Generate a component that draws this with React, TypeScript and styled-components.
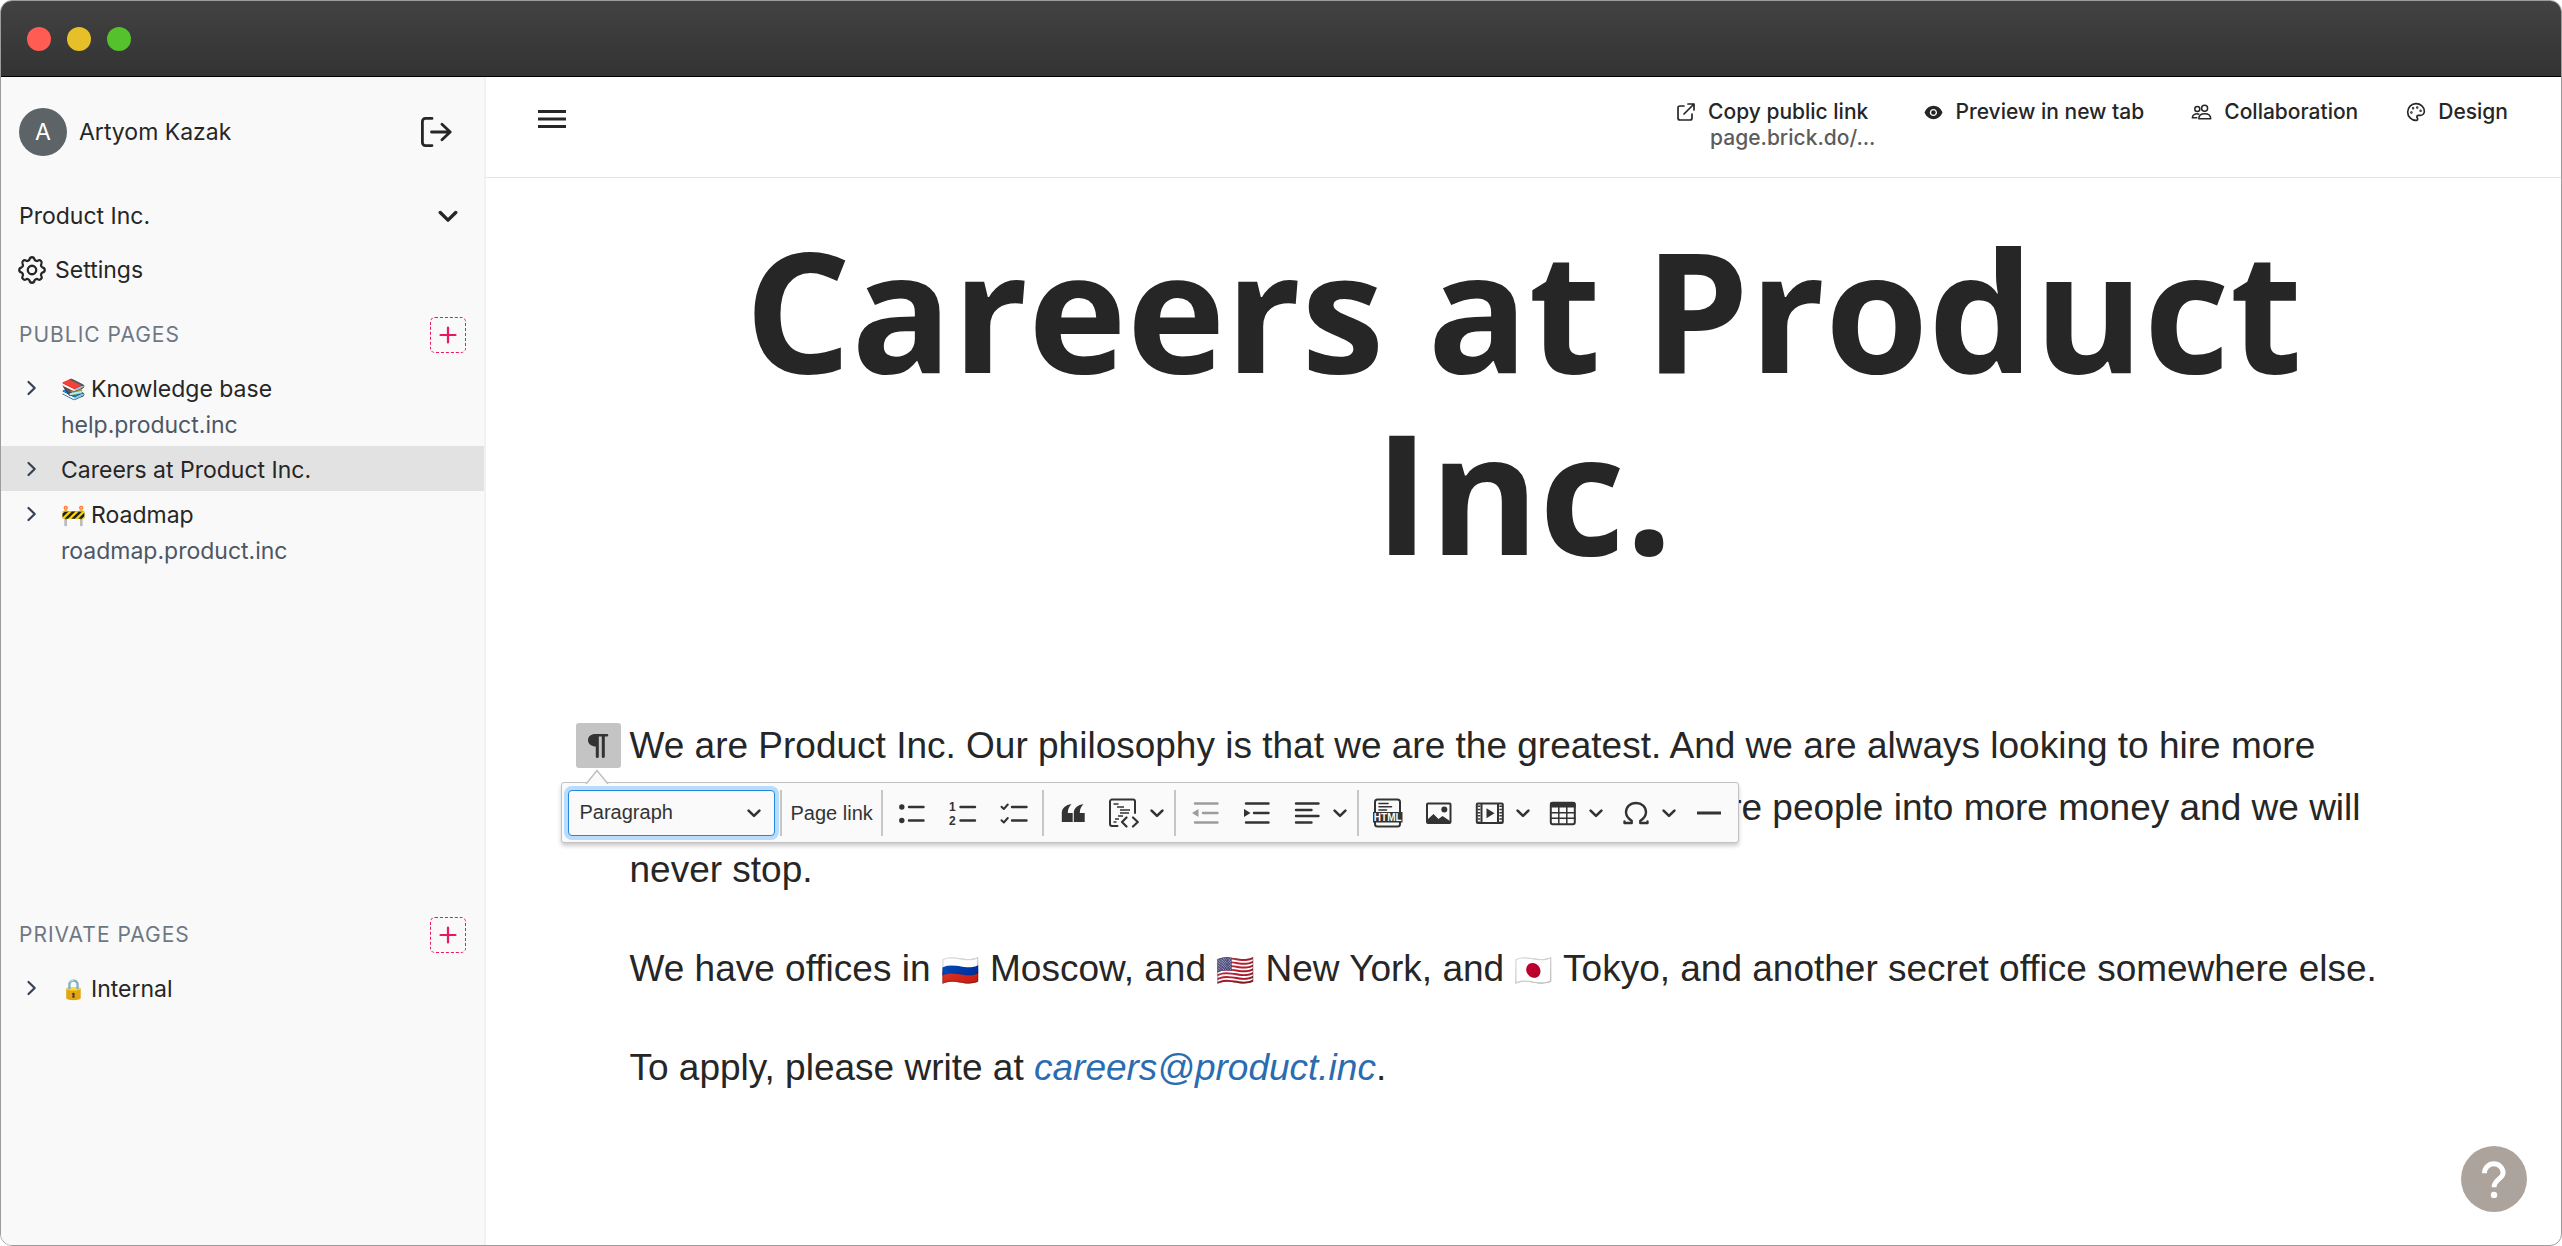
import React from "react";
import styled, { createGlobalStyle, css } from "styled-components";
import { HiOutlineCog, HiOutlineExternalLink } from "react-icons/hi";
import { AiFillEye } from "react-icons/ai";
import { Palette } from "lucide-react";

const ui = `Inter, "Liberation Sans", sans-serif`;
const body = `"Liberation Sans", Arial, sans-serif`;
const ink = "#262626";

const GlobalStyle = createGlobalStyle`
  *, *::before, *::after { box-sizing: border-box; }
  body { margin: 0; background: #fff; color: ${ink}; font-family: ${ui}; }
  h1, h2, p, ul { margin: 0; padding: 0; }
  ul { list-style: none; }
  a { color: inherit; text-decoration: none; }
  svg { display: block; flex: none; }
`;

/* ---------- reset for buttons ---------- */

const PlainButton = styled.button`
  display: flex;
  align-items: center;
  justify-content: center;
  margin: 0;
  padding: 0;
  border: 0;
  background: none;
  color: inherit;
  font: inherit;
  cursor: pointer;
`;

/* ---------- window ---------- */

const Window = styled.div`
  position: relative;
  display: flex;
  flex-direction: column;
  min-height: 100vh;
  border: 1px solid #9c9c9c;
  border-radius: 12px;
  overflow: hidden;
`;

const TitleBar = styled.div`
  display: flex;
  align-items: center;
  gap: 16px;
  height: 76px;
  padding: 0 26px;
  border-bottom: 1px solid #000;
  background: linear-gradient(#424242, #333);
`;

const Light = styled.span<{ $color: string }>`
  width: 24px;
  height: 24px;
  border-radius: 50%;
  background: ${(p) => p.$color};
`;

const Columns = styled.div`
  flex: 1;
  display: grid;
  grid-template-columns: 485px minmax(0, 1fr);
`;

/* ---------- sidebar ---------- */

const Sidebar = styled.aside`
  display: flex;
  flex-direction: column;
  border-right: 2px solid #f1f1f1;
  background: #f9f9f9;
  font-size: 23px;
  line-height: 36px;
`;

const UserRow = styled.div`
  display: flex;
  align-items: center;
  gap: 12px;
  margin: 31px 18px 33px;
`;

const Avatar = styled.span`
  display: grid;
  place-items: center;
  width: 48px;
  height: 48px;
  border-radius: 50%;
  background: #5c6468;
  color: #fff;
`;

const LogoutButton = styled(PlainButton)`
  width: 60px;
  height: 48px;
  margin-left: auto;
`;

const MenuRow = styled(PlainButton)`
  justify-content: flex-start;
  gap: 9px;
  height: 54px;
  padding: 0 18px;
`;

const RowEnd = styled.span`
  display: grid;
  place-items: center;
  width: 36px;
  margin-left: auto;
`;

const CogIcon = styled(HiOutlineCog)`
  width: 34px;
  height: 34px;
  margin: 0 -3px 0 -4px;
  path { stroke-width: 1.6; }
`;

const PagesSection = styled.section<{ $grow?: boolean }>`
  padding-top: 20px;
  ${(p) => (p.$grow ? css`flex: 1;` : css`min-height: 348px;`)}
`;

const SectionHead = styled.div`
  display: flex;
  align-items: center;
  justify-content: space-between;
  margin: 0 18px 12px;
`;

const SectionTitle = styled.h2`
  color: #6f7785;
  font-size: 21px;
  font-weight: 400;
  letter-spacing: 1px;
`;

const AddButton = styled(PlainButton)`
  width: 36px;
  height: 36px;
  border: 1px dashed #e8185f;
  border-radius: 5px;
  color: #e8185f;
`;

const PageRow = styled.li<{ $active?: boolean }>`
  display: flex;
  gap: 16px;
  padding: 6px 18px 3px;
  background: ${(p) => (p.$active ? "#e2e2e2" : "transparent")};
`;

const Expand = styled(PlainButton)`
  width: 26px;
  height: 34px;
  color: #364152;
`;

const PageLink = styled.a`
  display: flex;
  flex-direction: column;
`;

const PageName = styled.span`
  display: flex;
  align-items: center;
  gap: 5px;
`;

const PageIcon = styled.span`
  font-size: 20px;
`;

const PageUrl = styled.span`
  color: #4c5766;
`;

/* ---------- header ---------- */

const Main = styled.main`
  display: flex;
  flex-direction: column;
`;

const Header = styled.header`
  display: flex;
  justify-content: space-between;
  align-items: flex-start;
  min-height: 101px;
  padding: 22px 53px 20px 52px;
  border-bottom: 1px solid #e4e4e4;
`;

const BurgerButton = styled(PlainButton)`
  height: 40px;
`;

const HeaderNav = styled.nav`
  display: flex;
  align-items: flex-start;
  gap: 46px;
`;

const HeaderAction = styled(PlainButton)`
  display: grid;
  grid-template-columns: 24px auto;
  column-gap: 10px;
  align-items: center;
  justify-items: start;
  font-size: 21px;
  font-weight: 500;
  line-height: 26px;
`;

const IconSlot = styled.span`
  display: grid;
  place-items: center;
  width: 24px;
`;

const ActionNote = styled.span`
  grid-column: 2;
  padding-left: 2px;
  color: #5c5c5c;
`;

const LinkIcon = styled(HiOutlineExternalLink)`
  width: 24px;
  height: 24px;
  path { stroke-width: 1.7; }
`;

/* ---------- article ---------- */

const Article = styled.article`
  width: 100%;
  max-width: 1788px;
  margin: 0 auto;
  padding: 40px 0 80px;
`;

const Title = styled.h1`
  margin-bottom: 133px;
  font: 700 167px/182px "Open Sans", "Noto Sans", sans-serif;
  text-align: center;
`;

const Block = styled.div`
  position: relative;
  margin-bottom: 37px;
`;

const Text = styled.p`
  font: 37px/62px ${body};
`;

const Flag = styled.span`
  font-size: 31px;
  line-height: 1;
`;

const MailLink = styled.a`
  color: #2b6cb0;
  font-style: italic;
`;

const BlockButton = styled(PlainButton)`
  position: absolute;
  top: 8px;
  left: -54px;
  width: 45px;
  height: 45px;
  border-radius: 3px;
  background: #c4c4c4;
  color: #333;
`;

/* ---------- balloon toolbar ---------- */

const Balloon = styled.div`
  position: absolute;
  top: 67px;
  left: -69px;
  display: flex;
  align-items: center;
  gap: 5px;
  height: 61px;
  padding: 0 6px;
  border: 1px solid #c1c1c1;
  border-radius: 3px;
  background: #fafafa;
  box-shadow: 0 3px 4px rgba(0, 0, 0, 0.2);
  color: #333;
  font: 20px/30px ${body};
`;

const BalloonArrow = styled.svg`
  position: absolute;
  top: -14px;
  left: 23px;
`;

const SelectBox = styled.label`
  display: grid;
  align-items: center;
  width: 207px;
  height: 46px;
  > * { grid-area: 1 / 1; }
  > svg { justify-self: end; margin-right: 14px; pointer-events: none; }
`;

const StyleSelect = styled.select`
  appearance: none;
  width: 100%;
  height: 100%;
  padding: 0 40px 2px 11px;
  border: 1px solid #2188e0;
  border-radius: 4px;
  outline: none;
  background: #fafafa;
  box-shadow: 0 0 0 4px #badcfa;
  color: inherit;
  font: inherit;
`;

const Divider = styled.span`
  width: 2px;
  height: 46px;
  margin-right: 1px;
  background: #c6c6c6;
`;

const TextTool = styled(PlainButton)`
  height: 46px;
  padding: 0 3px;
`;

const Tool = styled(PlainButton)<{ $menu?: boolean }>`
  justify-content: flex-start;
  gap: 11px;
  width: ${(p) => (p.$menu ? 68 : 46)}px;
  height: 46px;
  padding-left: 8px;
  &:disabled { color: #9c9c9c; cursor: default; }
`;

/* ---------- help ---------- */

const HelpButton = styled(PlainButton)`
  position: absolute;
  right: 34px;
  bottom: 33px;
  width: 66px;
  height: 66px;
  border-radius: 50%;
  background: #ada39d;
  color: #fff;
`;

/* ---------- icons ---------- */

const Chevron = ({ w = 14, sw = 2.6 }: { w?: number; sw?: number }) => (
  <svg width={w} height={w} viewBox="0 0 14 14" fill="none" stroke="currentColor" strokeWidth={sw} strokeLinecap="round" strokeLinejoin="round">
    <path d="M1.6 4.6 7 9.9l5.4-5.3" />
  </svg>
);

const ExpandIcon = () => (
  <svg width="12" height="16" viewBox="0 0 12 16" fill="none" stroke="currentColor" strokeWidth="2.2" strokeLinecap="round" strokeLinejoin="round">
    <path d="M2.5 2 8.7 8l-6.2 6" />
  </svg>
);

const PlusIcon = () => (
  <svg width="18" height="18" viewBox="0 0 18 18" stroke="currentColor" strokeWidth="2.2" strokeLinecap="round">
    <path d="M9 1.5v15M1.5 9h15" />
  </svg>
);

const LogoutIcon = () => (
  <svg width="32" height="32" viewBox="0 0 32 32" fill="none" stroke="currentColor" strokeWidth="2.8" strokeLinecap="round" strokeLinejoin="round">
    <path d="M12 2.4H5.4a3 3 0 0 0-3 3v21.2a3 3 0 0 0 3 3H12M11.5 16H30M22 8.3l8.200 7.700-8.200 7.700" />
  </svg>
);

const BurgerIcon = () => (
  <svg width="28" height="18" viewBox="0 0 28 18" stroke="currentColor" strokeWidth="3">
    <path d="M0 1.5h28M0 9h28M0 16.5h28" />
  </svg>
);

const PeopleIcon = () => (
  <svg width="22" height="18" viewBox="0 0 22 18" fill="none" stroke="currentColor" strokeWidth="1.5" strokeLinejoin="round">
    <circle cx="6.3" cy="6" r="2.5" />
    <circle cx="13.6" cy="5.2" r="3" />
    <path d="M7.800 15.800c0-3.400 2.500-5 5.900-5s6 1.600 6 5zM8.300 11.200c-3.800-1-6.800.4-7 3.600h5" />
  </svg>
);

const PilcrowIcon = () => (
  <svg width="22" height="26" viewBox="0 0 22 26" fill="currentColor">
    <path d="M8.5 1H20a1.300 1.300 0 0 1 0 2.600h-2.200V23.500a1.500 1.500 0 0 1-3 0V3.600h-3V23.500a1.500 1.500 0 0 1-3 0V13.500C4.800 13.500 1 11 1 7.200S4 1 8.500 1z" />
  </svg>
);

const HelpIcon = () => (
  <svg width="66" height="66" viewBox="0 0 66 66" fill="none" stroke="currentColor" strokeWidth="4.9">
    <path d="M23.5 27.300c0-5.500 4.200-9.500 9.300-9.500s9.300 4 9.300 9c0 6.200-9 6.300-9 14.500" />
    <circle cx="33" cy="48.9" r="3.2" fill="currentColor" stroke="none" />
  </svg>
);

const Glyph = ({ children }: { children: React.ReactNode }) => (
  <svg width="30" height="30" viewBox="0 0 30 30" fill="none" stroke="currentColor" strokeWidth="2.4" strokeLinecap="round" strokeLinejoin="round">
    {children}
  </svg>
);

const digit = { fill: "currentColor", stroke: "none", fontFamily: "Liberation Sans, sans-serif", fontWeight: 700, fontSize: 12 };

const BulletsGlyph = () => (
  <Glyph>
    <path d="M12 9h14.500M12 22.500h14.500" />
    <circle cx="4.8" cy="9" r="2.7" fill="currentColor" stroke="none" />
    <circle cx="4.8" cy="22.5" r="2.7" fill="currentColor" stroke="none" />
  </Glyph>
);

const NumbersGlyph = () => (
  <Glyph>
    <path d="M12.500 9H27M12.500 22.500H27" />
    <text x="1" y="12.5" {...digit}>1</text>
    <text x="1" y="27" {...digit}>2</text>
  </Glyph>
);

const ChecksGlyph = () => (
  <Glyph>
    <path d="M13 9h14.500M13 22.500h14.500" />
    <path strokeWidth="2" d="M2.500 8.800l2.300 2.200 4-4.500M2.500 22.300l2.300 2.200 4-4.500" />
  </Glyph>
);

const QuoteGlyph = () => (
  <Glyph>
    <g fill="currentColor" stroke="none">
      <path d="M3.800 24v-9c0-5 4-8.200 9.800-8.700-2.600 2.400-3.700 4.800-3.800 8.700h4.900v9z" />
      <path d="M15.800 24v-9c0-5 4-8.200 9.800-8.700-2.600 2.400-3.700 4.800-3.800 8.700h4.900v9z" />
    </g>
  </Glyph>
);

const TemplateGlyph = () => (
  <Glyph>
    <path strokeWidth="2" d="M26 15V3.500a2 2 0 0 0-2-2H3a2 2 0 0 0-2 2v22.500a2 2 0 0 0 2 2h5.500" />
    <path strokeWidth="1.7" strokeLinecap="butt" d="M4.500 6h5M8 9h7M11 12h10M11 15h9M9 18h5M6 21h4M4.500 24h3" />
    <path strokeWidth="2.2" d="M17.500 19.500 13 24l4.500 4.500M24 19.500l4.800 4.500-4.800 4.500" />
  </Glyph>
);

const OutdentGlyph = () => (
  <Glyph>
    <path d="M5 5.500h22.500M13 15h14.500M5 24.500h22.500" />
    <path d="M8.500 11v8l-6.500-4z" fill="currentColor" stroke="none" />
  </Glyph>
);

const IndentGlyph = () => (
  <Glyph>
    <path d="M5 5.500h22.500M13 15h14.500M5 24.500h22.500" />
    <path d="M3 11v8l6.500-4z" fill="currentColor" stroke="none" />
  </Glyph>
);

const AlignGlyph = () => (
  <Glyph>
    <path d="M4 5.500h22.500M4 12h15.500M4 18h22.500M4 24.500h15.500" />
  </Glyph>
);

const HtmlGlyph = () => (
  <Glyph>
    <rect x="2" y="1.5" width="25" height="27" rx="2.5" strokeWidth="2" />
    <path strokeWidth="1.6" d="M6 5.500h9M6 8.800h12.500M6 12h7.500" />
    <rect x="0" y="14" width="29.5" height="10.5" fill="currentColor" stroke="none" />
    <text x="14.7" y="22.8" textAnchor="middle" {...digit} fill="#fafafa" fontSize={10}>HTML</text>
  </Glyph>
);

const ImageGlyph = () => (
  <Glyph>
    <rect x="3" y="5.5" width="23.5" height="19.5" rx="1" strokeWidth="2" />
    <circle cx="20.3" cy="11.5" r="3" fill="currentColor" stroke="none" />
    <path d="M3.500 24.500v-3l6-5.500 5 5 4-3 7.500 5v1.500z" fill="currentColor" stroke="none" />
  </Glyph>
);

const VideoGlyph = () => (
  <Glyph>
    <rect x="1.8" y="5.5" width="26" height="19.5" rx="1" strokeWidth="2" />
    <path strokeWidth="2" d="M6.500 6v19M23 6v19" />
    <path strokeWidth="2.6" strokeLinecap="butt" strokeDasharray="1.5 1.7" d="M4 7.500v17M25.600 7.500v17" />
    <path d="M11.500 10.200v10l8-5z" fill="currentColor" stroke="none" />
  </Glyph>
);

const TableGlyph = () => (
  <Glyph>
    <rect x="2.8" y="4.8" width="24" height="21.5" rx="2" strokeWidth="2" />
    <path d="M2 9.500V6a2 2 0 0 1 2-2h21.600a2 2 0 0 1 2 2v3.500z" fill="currentColor" stroke="none" />
    <path strokeWidth="1.5" d="M10.800 9v17M18.800 9v17M3 14.700h24M3 20.300h24" />
  </Glyph>
);

const OmegaGlyph = () => (
  <Glyph>
    <path d="M3.500 23.500V25h7.200v-2.200C7 20.500 5 17.800 5 14.300 5 8.800 9.200 5 15 5s10 3.800 10 9.300c0 3.500-2 6.200-5.700 8.500V25h7.200v-1.500" />
  </Glyph>
);

const RuleGlyph = () => (
  <Glyph>
    <path strokeWidth="3" strokeLinecap="butt" d="M3 15h24" />
  </Glyph>
);

/* ---------- parts ---------- */

type Page = { icon?: string; name: string; url?: string; active?: boolean };

const publicPages: Page[] = [
  { icon: "📚", name: "Knowledge base", url: "help.product.inc" },
  { name: "Careers at Product Inc.", active: true },
  { icon: "🚧", name: "Roadmap", url: "roadmap.product.inc" },
];

const privatePages: Page[] = [{ icon: "🔒", name: "Internal" }];

const Pages = ({ title, pages, grow }: { title: string; pages: Page[]; grow?: boolean }) => (
  <PagesSection $grow={grow}>
    <SectionHead>
      <SectionTitle>{title}</SectionTitle>
      <AddButton aria-label="Add page"><PlusIcon /></AddButton>
    </SectionHead>
    <ul>
      {pages.map((page) => (
        <PageRow key={page.name} $active={page.active}>
          <Expand aria-label="Expand"><ExpandIcon /></Expand>
          <PageLink href="#">
            <PageName>
              {page.icon && <PageIcon>{page.icon}</PageIcon>}
              {page.name}
            </PageName>
            {page.url && <PageUrl>{page.url}</PageUrl>}
          </PageLink>
        </PageRow>
      ))}
    </ul>
  </PagesSection>
);

const Toolbar = () => (
  <Balloon role="toolbar" aria-label="Block toolbar">
    <BalloonArrow width="24" height="15" viewBox="0 0 24 15">
      <path d="M1 15 12 1.500 23 15" fill="#fafafa" stroke="#c1c1c1" strokeWidth="1.5" />
    </BalloonArrow>
    <SelectBox>
      <StyleSelect aria-label="Block style">
        <option>Paragraph</option>
      </StyleSelect>
      <Chevron />
    </SelectBox>
    <Divider />
    <TextTool>Page link</TextTool>
    <Divider />
    <Tool aria-label="Bulleted list"><BulletsGlyph /></Tool>
    <Tool aria-label="Numbered list"><NumbersGlyph /></Tool>
    <Tool aria-label="To-do list"><ChecksGlyph /></Tool>
    <Divider />
    <Tool aria-label="Quote"><QuoteGlyph /></Tool>
    <Tool $menu aria-label="Code block"><TemplateGlyph /><Chevron /></Tool>
    <Divider />
    <Tool disabled aria-label="Decrease indent"><OutdentGlyph /></Tool>
    <Tool aria-label="Increase indent"><IndentGlyph /></Tool>
    <Tool $menu aria-label="Alignment"><AlignGlyph /><Chevron /></Tool>
    <Divider />
    <Tool aria-label="Insert HTML"><HtmlGlyph /></Tool>
    <Tool aria-label="Insert image"><ImageGlyph /></Tool>
    <Tool $menu aria-label="Insert media"><VideoGlyph /><Chevron /></Tool>
    <Tool $menu aria-label="Insert table"><TableGlyph /><Chevron /></Tool>
    <Tool $menu aria-label="Special characters"><OmegaGlyph /><Chevron /></Tool>
    <Tool aria-label="Horizontal line"><RuleGlyph /></Tool>
  </Balloon>
);

export default function App() {
  return (
    <>
      <GlobalStyle />
      <Window>
        <TitleBar>
          <Light $color="#ff5c54" />
          <Light $color="#e6bf29" />
          <Light $color="#55c22d" />
        </TitleBar>
        <Columns>
          <Sidebar>
            <UserRow>
              <Avatar>A</Avatar>
              Artyom Kazak
              <LogoutButton aria-label="Log out"><LogoutIcon /></LogoutButton>
            </UserRow>
            <MenuRow>
              Product Inc.
              <RowEnd><Chevron w={20} sw={2.4} /></RowEnd>
            </MenuRow>
            <MenuRow>
              <CogIcon />
              Settings
            </MenuRow>
            <Pages title="PUBLIC PAGES" pages={publicPages} grow />
            <Pages title="PRIVATE PAGES" pages={privatePages} />
          </Sidebar>
          <Main>
            <Header>
              <BurgerButton aria-label="Toggle sidebar"><BurgerIcon /></BurgerButton>
              <HeaderNav>
                <HeaderAction>
                  <IconSlot><LinkIcon /></IconSlot>
                  <span>Copy public link</span>
                  <ActionNote>page.brick.do/...</ActionNote>
                </HeaderAction>
                <HeaderAction>
                  <IconSlot><AiFillEye size={21} /></IconSlot>
                  <span>Preview in new tab</span>
                </HeaderAction>
                <HeaderAction>
                  <IconSlot><PeopleIcon /></IconSlot>
                  <span>Collaboration</span>
                </HeaderAction>
                <HeaderAction>
                  <IconSlot><Palette size={20} strokeWidth={2} /></IconSlot>
                  <span>Design</span>
                </HeaderAction>
              </HeaderNav>
            </Header>
            <Article>
              <Title>Careers at Product Inc.</Title>
              <Block>
                <Text>
                  We are Product Inc. Our philosophy is that we are the greatest. And we are always looking to hire more
                  people. We have figured out a remarkably fast way to turn even more people into more money and we will
                  never stop.
                </Text>
                <BlockButton aria-label="Edit block"><PilcrowIcon /></BlockButton>
                <Toolbar />
              </Block>
              <Block>
                <Text>
                  We have offices in <Flag>🇷🇺</Flag> Moscow, and <Flag>🇺🇸</Flag> New York, and <Flag>🇯🇵</Flag> Tokyo, and
                  another secret office somewhere else.
                </Text>
              </Block>
              <Block>
                <Text>
                  To apply, please write at <MailLink href="mailto:careers@product.inc">careers@product.inc</MailLink>.
                </Text>
              </Block>
            </Article>
          </Main>
        </Columns>
        <HelpButton aria-label="Help"><HelpIcon /></HelpButton>
      </Window>
    </>
  );
}
